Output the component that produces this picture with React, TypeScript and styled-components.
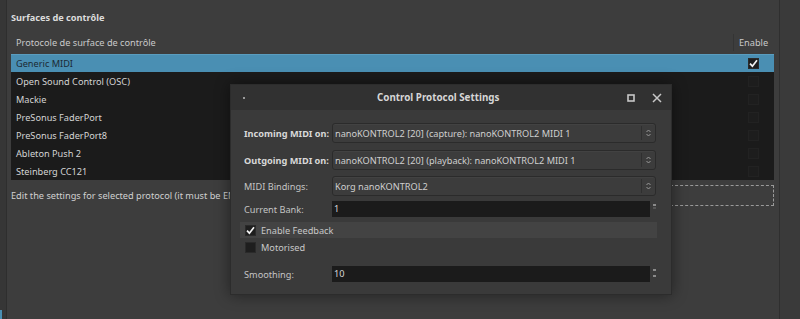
import React from "react";
import styled, { createGlobalStyle } from "styled-components";

const GlobalStyle = createGlobalStyle`
  html, body { margin: 0; padding: 0; }
  body {
    background: #3d3d3d;
    font-family: "Noto Sans", "Open Sans", sans-serif;
    font-size: 9.2px;
    color: #cfcfcf;
    overflow: hidden;
  }
`;

const Page = styled.div`
  position: relative;
  display: flex;
  width: 800px;
  height: 319px;
  background: #3d3d3d;
`;

const LeftStrip = styled.div`
  width: 6px;
  background: #363636;
  border-right: 1px solid #2e2e2e;
  display: flex;
  flex-direction: column;
  justify-content: flex-end;
`;

const LeftAccent = styled.div`
  width: 2px;
  height: 9px;
  background: #4a8fb3;
`;

const Main = styled.div`
  flex: 1;
  display: flex;
  flex-direction: column;
  padding: 0 5px 0 4px;
`;

const RightDivider = styled.div`
  width: 1px;
  background: #2f2f2f;
`;

const RightPanel = styled.div`
  width: 20px;
  background: #3a3a3a;
`;

const SectionTitle = styled.div`
  height: 30px;
  padding-top: 10px;
  box-sizing: border-box;
  font-weight: 700;
  color: #dcdcdc;
  line-height: 15px;
`;

const Table = styled.div`
  display: flex;
  flex-direction: column;
`;

const HeaderRow = styled.div`
  display: flex;
  height: 24px;
  align-items: center;
  color: #c9c9c9;
`;

const HeaderCell = styled.div<{ $sep?: boolean; $w?: number }>`
  ${(p) => (p.$w ? `width: ${p.$w}px;` : "flex: 1;")}
  box-sizing: border-box;
  padding-left: 5px;
  height: 17px;
  line-height: 17px;
  border-left: ${(p) => (p.$sep ? "1px solid #343434" : "none")};
`;

const Body = styled.div`
  background: #1b1b1b;
  display: flex;
  flex-direction: column;
`;

const Row = styled.div<{ $selected?: boolean }>`
  display: flex;
  align-items: center;
  height: 18px;
  box-sizing: border-box;
  background: ${(p) => (p.$selected ? "#4a8fb3" : "transparent")};
  border-top: 1px solid ${(p) => (p.$selected ? "#5a9dbf" : "transparent")};
  color: ${(p) => (p.$selected ? "#1c2a33" : "#d4d4d4")};
`;

const RowName = styled.div`
  flex: 1;
  padding-left: 5px;
`;

const RowCheck = styled.div`
  width: 41px;
  display: flex;
  justify-content: center;
`;

const CheckBox = styled.div<{ $faint?: boolean }>`
  width: 11px;
  height: 11px;
  box-sizing: border-box;
  background: ${(p) => (p.$faint ? "#1d1d1d" : "#1e1e1e")};
  border: 1px solid ${(p) => (p.$faint ? "#222" : "#2a2a2a")};
  display: flex;
  align-items: center;
  justify-content: center;
  flex: none;
`;

const HelpRow = styled.div`
  display: flex;
  align-items: center;
  height: 21px;
  margin-top: 5px;
  color: #d0d0d0;
`;

const HelpText = styled.div`
  flex: 1;
  white-space: nowrap;
`;

const DottedButton = styled.div`
  width: 210px;
  height: 21px;
  box-sizing: border-box;
  border: 1px dashed #9a9a9a;
  background: #3d3d3d;
`;

/* Dialog */
const Dialog = styled.div`
  position: absolute;
  left: 230px;
  top: 84px;
  width: 442px;
  height: 211px;
  box-sizing: border-box;
  background: #3a3a3a;
  border: 1px solid #2c2c2c;
  box-shadow: 0 0 14px rgba(0, 0, 0, 0.45);
  display: flex;
  flex-direction: column;
`;

const TitleBar = styled.div`
  height: 25px;
  background: #313131;
  display: flex;
  align-items: center;
  padding: 0 9px 0 12px;
`;

const TitleDot = styled.div`
  width: 2px;
  height: 2px;
  background: #9a9a9a;
`;

const Title = styled.div`
  flex: 1;
  padding-left: 132px;
  font-weight: 700;
  font-size: 9.8px;
  color: #d6d6d6;
`;

const TitleButtons = styled.div`
  display: flex;
  align-items: center;
  gap: 17px;
`;

const DialogBody = styled.div`
  display: flex;
  flex-direction: column;
  padding: 13px 15px 0 13px;
`;

const FieldRow = styled.div<{ $mt?: number }>`
  display: grid;
  grid-template-columns: 88px 1fr;
  align-items: center;
  margin-top: ${(p) => p.$mt ?? 0}px;
`;

const Label = styled.div<{ $bold?: boolean }>`
  font-weight: ${(p) => (p.$bold ? 700 : 400)};
  color: ${(p) => (p.$bold ? "#d8d8d8" : "#c4c4c4")};
  white-space: nowrap;
`;

const Combo = styled.div`
  height: 20px;
  box-sizing: border-box;
  border: 1px solid #2b2b2b;
  border-radius: 3px;
  background: #3c3c3c;
  box-shadow: inset 0 1px 0 rgba(255, 255, 255, 0.03);
  display: flex;
  align-items: center;
  color: #cfcfcf;
`;

const ComboText = styled.div`
  flex: 1;
  padding-left: 2px;
  white-space: nowrap;
  overflow: hidden;
`;

const ComboArrow = styled.div`
  width: 13px;
  height: 14px;
  border-left: 1px solid #2f2f2f;
  display: flex;
  align-items: center;
  justify-content: center;
`;

const EntryWrap = styled.div`
  display: flex;
  align-items: flex-start;
`;

const Entry = styled.div`
  flex: 1;
  height: 16px;
  line-height: 16px;
  box-sizing: border-box;
  background: #1b1b1b;
  padding-left: 2px;
  color: #d6d6d6;
`;

const Spin = styled.div<{ $h: number }>`
  width: 6px;
  height: ${(p) => p.$h}px;
  box-sizing: border-box;
  display: flex;
  flex-direction: column;
  justify-content: space-between;
  align-items: flex-end;
  margin-top: 3px;
`;

const SpinMark = styled.div<{ $dim?: boolean }>`
  width: 3px;
  height: 2px;
  background: ${(p) => (p.$dim ? "#555" : "#8a8a8a")};
`;

const CheckRow = styled.div<{ $hl?: boolean; $mt?: number }>`
  display: flex;
  align-items: center;
  gap: 5px;
  height: 16px;
  margin: ${(p) => p.$mt ?? 0}px -1px 0 -4px;
  padding-left: 5px;
  background: ${(p) => (p.$hl ? "#434343" : "transparent")};
  color: #c8c8c8;
`;

const CheckMark = () => (
  <svg width="9" height="9" viewBox="0 0 9 9">
    <path d="M1 4.6 L3.4 7.2 L8 1.2" fill="none" stroke="#f2f2f2" strokeWidth="1.7" />
  </svg>
);

const UpDown = () => (
  <svg width="5" height="8" viewBox="0 0 5 8">
    <path d="M0.5 3 L2.5 1 L4.5 3 M0.5 5 L2.5 7 L4.5 5" fill="none" stroke="#9a9a9a" strokeWidth="1" />
  </svg>
);

const MaxIcon = () => (
  <svg width="8" height="8" viewBox="0 0 8 8">
    <rect x="1" y="1" width="6" height="6" fill="none" stroke="#c8c8c8" strokeWidth="1.6" />
  </svg>
);

const CloseIcon = () => (
  <svg width="10" height="10" viewBox="0 0 10 10">
    <path d="M1 1 L9 9 M9 1 L1 9" stroke="#c8c8c8" strokeWidth="1.5" />
  </svg>
);

const protocols = [
  "Generic MIDI",
  "Open Sound Control (OSC)",
  "Mackie",
  "PreSonus FaderPort",
  "PreSonus FaderPort8",
  "Ableton Push 2",
  "Steinberg CC121",
];

export default function App() {
  return (
    <>
      <GlobalStyle />
      <Page>
        <LeftStrip>
          <LeftAccent />
        </LeftStrip>
        <Main>
          <SectionTitle>Surfaces de contrôle</SectionTitle>
          <Table>
            <HeaderRow>
              <HeaderCell>Protocole de surface de contrôle</HeaderCell>
              <HeaderCell $sep $w={41}>Enable</HeaderCell>
            </HeaderRow>
            <Body>
              {protocols.map((p, i) => (
                <Row key={p} $selected={i === 0}>
                  <RowName>{p}</RowName>
                  <RowCheck>
                    {i === 0 ? (
                      <CheckBox>
                        <CheckMark />
                      </CheckBox>
                    ) : (
                      <CheckBox $faint />
                    )}
                  </RowCheck>
                </Row>
              ))}
            </Body>
          </Table>
          <HelpRow>
            <HelpText>Edit the settings for selected protocol (it must be ENABLED first):</HelpText>
            <DottedButton />
          </HelpRow>
        </Main>
        <RightDivider />
        <RightPanel />

        <Dialog>
          <TitleBar>
            <TitleDot />
            <Title>Control Protocol Settings</Title>
            <TitleButtons>
              <MaxIcon />
              <CloseIcon />
            </TitleButtons>
          </TitleBar>
          <DialogBody>
            <FieldRow>
              <Label $bold>Incoming MIDI on:</Label>
              <Combo>
                <ComboText>nanoKONTROL2 [20] (capture): nanoKONTROL2 MIDI 1</ComboText>
                <ComboArrow><UpDown /></ComboArrow>
              </Combo>
            </FieldRow>
            <FieldRow $mt={7}>
              <Label $bold>Outgoing MIDI on:</Label>
              <Combo>
                <ComboText>nanoKONTROL2 [20] (playback): nanoKONTROL2 MIDI 1</ComboText>
                <ComboArrow><UpDown /></ComboArrow>
              </Combo>
            </FieldRow>
            <FieldRow $mt={6}>
              <Label>MIDI Bindings:</Label>
              <Combo>
                <ComboText>Korg nanoKONTROL2</ComboText>
                <ComboArrow><UpDown /></ComboArrow>
              </Combo>
            </FieldRow>
            <FieldRow $mt={5}>
              <Label>Current Bank:</Label>
              <EntryWrap>
                <Entry>1</Entry>
                <Spin $h={5}>
                  <SpinMark />
                  <SpinMark $dim />
                </Spin>
              </EntryWrap>
            </FieldRow>
            <CheckRow $hl $mt={5}>
              <CheckBox>
                <CheckMark />
              </CheckBox>
              Enable Feedback
            </CheckRow>
            <CheckRow $mt={1}>
              <CheckBox />
              Motorised
            </CheckRow>
            <FieldRow $mt={11}>
              <Label>Smoothing:</Label>
              <EntryWrap>
                <Entry>10</Entry>
                <Spin $h={8}>
                  <SpinMark />
                  <SpinMark />
                </Spin>
              </EntryWrap>
            </FieldRow>
          </DialogBody>
        </Dialog>
      </Page>
    </>
  );
}
